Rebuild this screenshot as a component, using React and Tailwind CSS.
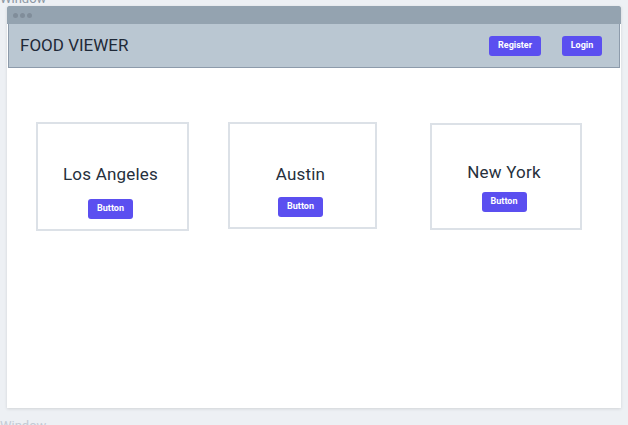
import React from 'react'

const cities = [
  { name: 'Los Angeles', box: 'ml-[29px] mt-[54px] w-[153px] h-[109px]', text: 'pt-[38px]', gap: 'mt-[13px]' },
  { name: 'Austin', box: 'ml-[39px] mt-[54px] w-[149px] h-[107px]', text: 'pt-[38px]', gap: 'mt-[11px]' },
  { name: 'New York', box: 'ml-[53px] mt-[55px] w-[152px] h-[107px]', text: 'pt-[35px]', gap: 'mt-[8px]' },
]

const Card = ({ c }) => (
  <div className={`${c.box} shrink-0 border-2 border-[#dce1e7] bg-white flex flex-col items-center ${c.text}`}>
    <div className="text-[17px] leading-[24px] text-[#26303c] tracking-[0.2px] -translate-x-[2px]">{c.name}</div>
    <button className={`${c.gap} h-[20px] w-[45px] rounded-[3px] bg-[#5b4ff0] text-white text-[9px] font-bold -translate-x-[2px]`}>
      Button
    </button>
  </div>
)

export default function App() {
  return (
    <div className="h-[425px] w-[628px] overflow-hidden bg-[#edf0f4] pl-[7px] pt-[7px]" style={{ fontFamily: 'Roboto, "Open Sans", sans-serif' }}>
      <div className="-mt-[17px] mb-[-1px] h-[17px] text-[13px] leading-[17px] text-[#8d98a4] -ml-[7px]">Window</div>
      <div className="w-[614px] h-[402px] bg-white shadow-[0_1px_3px_rgba(0,0,0,0.12)] flex flex-col">
        <div className="h-[18px] bg-[#94a3b0] rounded-t-[2px] flex items-center gap-[2px] pl-[6px]">
          <span className="w-[5px] h-[5px] rounded-full bg-[#808d9a]" />
          <span className="w-[5px] h-[5px] rounded-full bg-[#808d9a]" />
          <span className="w-[5px] h-[5px] rounded-full bg-[#808d9a]" />
        </div>
        <div className="mx-[1px] h-[44px] bg-[#bac7d2] border border-t-0 border-[#8d9bab] flex items-center pl-[11px] pr-[17px]">
          <div className="text-[17px] text-[#1f2937]">FOOD VIEWER</div>
          <div className="ml-auto flex gap-[21px]">
            <button className="h-[20px] w-[52px] rounded-[3px] bg-[#5b4ff0] text-white text-[9px] font-bold">Register</button>
            <button className="h-[20px] w-[40px] rounded-[3px] bg-[#5b4ff0] text-white text-[9px] font-bold">Login</button>
          </div>
        </div>
        <div className="flex items-start">
          {cities.map((c) => (
            <Card key={c.name} c={c} />
          ))}
        </div>
      </div>
      <div className="mt-[9px] -ml-[7px] text-[13px] leading-[17px] text-[#c3cbd4]">Window</div>
    </div>
  )
}
